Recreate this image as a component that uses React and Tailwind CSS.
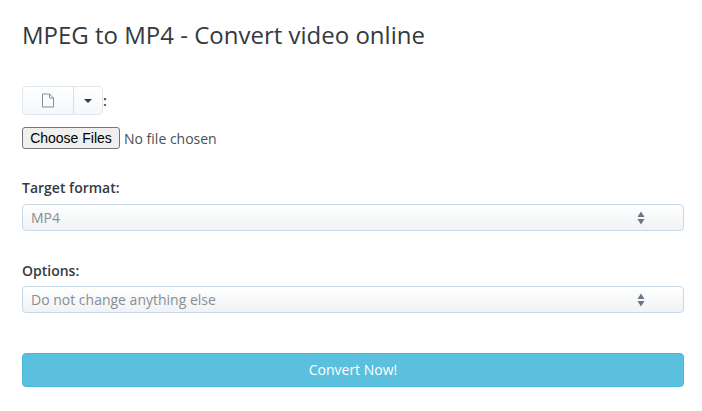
import React from "react";

function Arrows() {
  return (
    <svg width="8" height="14" viewBox="0 0 8 14" className="text-[#6c7682]">
      <path d="M4 0.5 L7.5 6 H0.5 Z M0.5 8 H7.5 L4 13.5 Z" fill="currentColor" />
    </svg>
  );
}

function SelectBox({ label, value, labelClass }) {
  return (
    <div>
      <div className={"text-[14px] leading-[20px] font-semibold text-[#343a40] " + labelClass}>{label}</div>
      <div className="h-[27px] flex items-center justify-between pl-[8px] pr-[38px] rounded-[4px] border border-[#c9d8e8] bg-gradient-to-b from-white to-[#f0f2f5] text-[14px] text-[#868e96]">
        <span>{value}</span>
        <Arrows />
      </div>
    </div>
  );
}

export default function App() {
  return (
    <div className="w-[702px] h-[411px] bg-white pl-[22px] pr-[18px] font-['Open_Sans',sans-serif] overflow-hidden">
      <h1 className="pt-[18px] text-[24px] leading-[34px] text-[#343a40] font-normal">MPEG to MP4 - Convert video online</h1>

      <div className="mt-[34px] flex items-center h-[29px] text-[14px] text-[#343a40]">
        <div className="flex h-[29px] rounded-[4px] border border-[#dfe8f1] bg-gradient-to-b from-white to-[#f5f7f9]">
          <div className="w-[51px] flex items-center justify-center border-r border-[#d5dfe9]">
            <svg width="14" height="15" viewBox="0 0 14 15" fill="none" stroke="#868e96" strokeWidth="1">
              <path d="M1.5 1 H8.5 L12.5 5 V14 H1.5 Z M8.5 1 V5 H12.5" />
            </svg>
          </div>
          <div className="w-[28px] flex items-center justify-center">
            <div className="w-0 h-0 border-x-[4px] border-x-transparent border-t-[4px] border-t-[#343a40]" />
          </div>
        </div>
        <span className="font-semibold">:</span>
      </div>

      <div className="mt-[11px] flex items-center h-[24px]">
        <button className="h-[22px] w-[98px] rounded-[3px] border border-[#767676] bg-[#efefef] text-[14px] leading-none text-black font-['Liberation_Sans',sans-serif]">
          Choose Files
        </button>
        <span className="ml-[4px] text-[14px] text-[#495057]">No file chosen</span>
      </div>

      <div className="mt-[28px]">
        <SelectBox label="Target format:" value="MP4" labelClass="mb-[6px]" />
      </div>
      <div className="mt-[30px]">
        <SelectBox label="Options:" value="Do not change anything else" labelClass="mb-[5px]" />
      </div>

      <button className="mt-[40px] w-full h-[34px] pb-[2px] rounded-[4px] border border-[#46b8da] bg-[#5bc0de] text-[14px] text-white">
        Convert Now!
      </button>
    </div>
  );
}
